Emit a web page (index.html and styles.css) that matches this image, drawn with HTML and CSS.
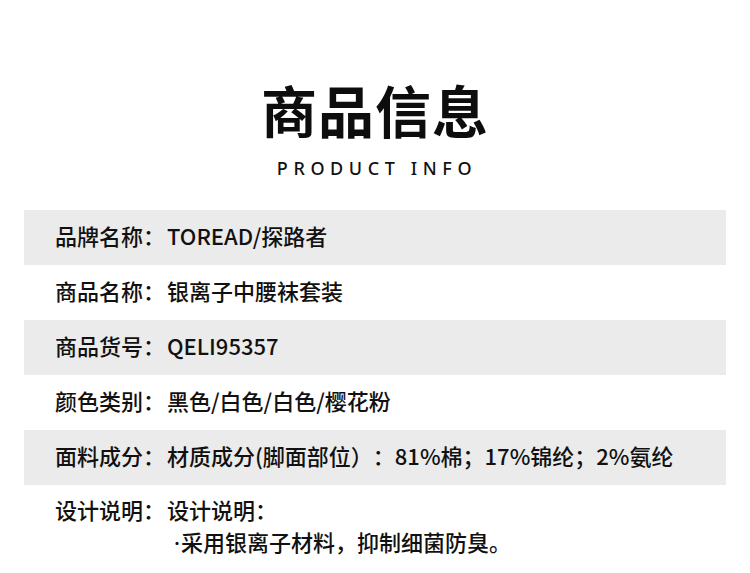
FILE: index.html
```html
<!DOCTYPE html>
<html lang="zh-CN">
<head>
<meta charset="utf-8">
<title>商品信息</title>
<link rel="stylesheet" href="styles.css">
</head>
<body>
<header class="head">
  <h1 class="title">商品信息</h1>
  <p class="subtitle">PRODUCT INFO</p>
</header>
<section class="specs">
  <div class="row shade"><span class="label">品牌名称：</span><span class="value">TOREAD/探路者</span></div>
  <div class="row"><span class="label">商品名称：</span><span class="value">银离子中腰袜套装</span></div>
  <div class="row shade"><span class="label">商品货号：</span><span class="value">QELI95357</span></div>
  <div class="row"><span class="label">颜色类别：</span><span class="value">黑色/白色/白色/樱花粉</span></div>
  <div class="row shade"><span class="label">面料成分：</span><span class="value">材质成分(脚面部位）：81%棉；17%锦纶；2%氨纶</span></div>
  <div class="row desc"><span class="label">设计说明：</span><span class="value">设计说明：<br><span class="dot">·</span>采用银离子材料，抑制细菌防臭。</span></div>
</section>
</body>
</html>
```

FILE: styles.css
```css
html, body {
  margin: 0;
  padding: 0;
  background: #ffffff;
}
body {
  width: 750px;
  height: 573px;
  overflow: hidden;
  font-family: "Noto Sans CJK SC", "Noto Sans", sans-serif;
  color: #111111;
  text-spacing-trim: space-all;
}
.head {
  padding-top: 81px;
  display: flex;
  flex-direction: column;
  align-items: center;
}
.title {
  margin: 0;
  font-size: 56px;
  line-height: 56px;
  font-weight: 700;
  letter-spacing: 1px;
  color: #0d0d0d;
}
.subtitle {
  margin: 22px 0 0 0;
  font-family: "Noto Sans", sans-serif;
  font-size: 18px;
  line-height: 18px;
  font-weight: 500;
  letter-spacing: 5.6px;
  padding-left: 4px;
  color: #111;
}
.specs {
  margin: 33px 24px 0 24px;
}
.row {
  display: flex;
  align-items: center;
  height: 55px;
  box-sizing: border-box;
  padding-left: 31px;
  padding-bottom: 5px;
  font-size: 22px;
  font-weight: 500;
}
.shade {
  background: #ebebeb;
}
.label {
  width: 112px;
  flex: none;
}
.desc {
  align-items: flex-start;
  height: auto;
  padding-top: 8px;
  padding-bottom: 0;
  line-height: 32px;
}
.dot {
  display: inline-block;
  width: 14px;
  padding-right: 1px;
  box-sizing: border-box;
  text-align: right;
  font-family: "Noto Sans", sans-serif;
}
```
